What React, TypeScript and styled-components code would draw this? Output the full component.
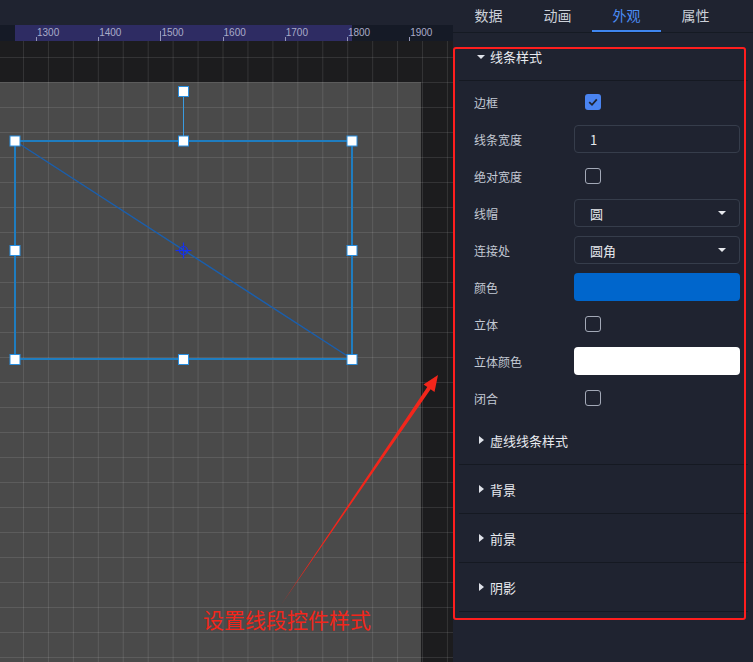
import React from "react";
import styled, { createGlobalStyle, css } from "styled-components";

const GlobalStyle = createGlobalStyle`
  html, body { margin: 0; padding: 0; background: #1f2330; }
  body { font-family: "Noto Sans CJK SC", "Noto Sans", sans-serif; overflow: hidden; }
  * { box-sizing: border-box; }
`;

const Page = styled.div`
  display: flex;
  width: 753px;
  height: 662px;
  overflow: hidden;
`;

/* ---------- canvas side ---------- */
const Canvas = styled.div`
  position: relative;
  width: 453px;
  height: 100%;
  flex: none;
  display: flex;
  flex-direction: column;
  background: #1c1c1e;
`;

const TopBar = styled.div`
  height: 25px;
  flex: none;
  background: #1f2330;
`;

const Ruler = styled.div`
  height: 16px;
  flex: none;
  display: flex;
  padding-left: 36px;
  overflow: hidden;
  background: linear-gradient(
    to right,
    #151a26 0 15px,
    #2e2c63 15px 352px,
    #151a26 352px
  );
`;

const RulerMark = styled.div<{ $tall?: boolean }>`
  position: relative;
  width: 62.2px;
  flex: none;
  padding: 3px 0 0 1px;
  font-family: "Liberation Sans", Arial, sans-serif;
  font-size: 10px;
  line-height: 10px;
  color: #a9abc8;
  &::before {
    content: "";
    position: absolute;
    left: 0;
    bottom: 0;
    width: 1px;
    height: ${(p) => (p.$tall ? "10px" : "4px")};
    background: #9597b8;
  }
`;

const grid = css`
  background-image: linear-gradient(to right, rgba(255, 255, 255, 0.1) 1px, transparent 1px),
    linear-gradient(to bottom, rgba(255, 255, 255, 0.1) 1px, transparent 1px);
  background-size: 24.94px 25px;
`;

const Workspace = styled.div`
  flex: 1;
  display: flex;
  padding: 41px 32px 0 0;
  background-color: #1c1c1e;
  ${grid};
  background-position: 23px 16px;
`;

const Stage = styled.div`
  flex: 1;
  background-color: #4a4a4a;
  ${grid};
  background-position: 23px 0;
`;

const Overlay = styled.svg`
  position: absolute;
  left: 0;
  top: 0;
  width: 453px;
  height: 662px;
  pointer-events: none;
`;

const Annotation = styled.div`
  position: absolute;
  left: 203px;
  top: 607px;
  font-size: 21px;
  line-height: 24px;
  color: #f2261b;
  white-space: nowrap;
`;

/* ---------- panel side ---------- */
const Panel = styled.aside`
  position: relative;
  width: 300px;
  height: 100%;
  flex: none;
  display: flex;
  flex-direction: column;
  background: #1f2330;
`;

const Tabs = styled.div`
  display: flex;
  height: 33px;
  flex: none;
  padding-left: 1px;
  border-bottom: 1px solid #151a23;
`;

const Tab = styled.div<{ $active?: boolean }>`
  width: 69px;
  display: flex;
  align-items: center;
  justify-content: center;
  font-size: 14px;
  color: ${(p) => (p.$active ? "#4b8df5" : "#ccd1d9")};
  border-bottom: 2px solid ${(p) => (p.$active ? "#3f86f0" : "transparent")};
`;

const Sections = styled.div`
  margin: 0 5px 0 6px;
  display: flex;
  flex-direction: column;
`;

const SectionHeader = styled.div<{ $h: number }>`
  height: ${(p) => p.$h}px;
  flex: none;
  display: flex;
  align-items: center;
  gap: 5px;
  padding-left: 18px;
  border-bottom: 1px solid #151922;
  font-size: 13px;
  color: #e8eaef;
`;

const Caret = styled.span<{ $open?: boolean }>`
  width: 8px;
  display: flex;
  justify-content: center;
  &::before {
    content: "";
    width: 0;
    height: 0;
    ${(p) =>
      p.$open
        ? css`
            border-left: 4px solid transparent;
            border-right: 4px solid transparent;
            border-top: 4px solid #dfe2e9;
          `
        : css`
            border-top: 4px solid transparent;
            border-bottom: 4px solid transparent;
            border-left: 5px solid #dfe2e9;
          `}
  }
`;

const SectionBody = styled.div`
  display: flex;
  flex-direction: column;
  gap: 9px;
  padding: 7px 0 4px;
`;

const Row = styled.div`
  display: grid;
  grid-template-columns: 100px 166px;
  align-items: center;
  height: 28px;
  padding-left: 15px;
`;

const Label = styled.span`
  font-size: 12px;
  color: #c3c9d4;
`;

const Field = styled.div`
  height: 28px;
  display: flex;
  align-items: center;
  justify-content: space-between;
  padding: 0 13px 0 15px;
  border: 1px solid #363d4b;
  border-radius: 4px;
  font-size: 13px;
  color: #e6e8ec;
`;

const DropCaret = styled.span`
  width: 0;
  height: 0;
  border-left: 4.5px solid transparent;
  border-right: 4.5px solid transparent;
  border-top: 4.5px solid #e6e8ec;
`;

const Swatch = styled.div<{ $color: string }>`
  height: 28px;
  border-radius: 4px;
  background: ${(p) => p.$color};
`;

const Check = styled.span<{ $checked?: boolean }>`
  margin-left: 11px;
  width: 16px;
  height: 16px;
  border-radius: 3px;
  display: flex;
  align-items: center;
  justify-content: center;
  ${(p) =>
    p.$checked
      ? css`
          background: #4a84f1;
        `
      : css`
          border: 1.5px solid #a3a9b7;
        `}
`;

const RedFrame = styled.div`
  position: absolute;
  left: 0;
  top: 47px;
  width: 293px;
  height: 573px;
  border: 2px solid #ff1e1e;
  border-radius: 3px;
  pointer-events: none;
`;

/* ---------- drawing helpers ---------- */
const Handle: React.FC<{ x: number; y: number }> = ({ x, y }) => (
  <rect x={x - 5} y={y - 5} width={10} height={10} fill="#ffffff" stroke="#2a8fe0" strokeWidth={1} />
);

const rulerMarks = [
  { t: "1300" },
  { t: "1400" },
  { t: "1500", tall: true },
  { t: "1600" },
  { t: "1700" },
  { t: "1800" },
  { t: "1900" },
];

type RowDef =
  | { label: string; kind: "check"; checked?: boolean }
  | { label: string; kind: "input"; value: string }
  | { label: string; kind: "select"; value: string }
  | { label: string; kind: "swatch"; color: string };

const rows: RowDef[] = [
  { label: "边框", kind: "check", checked: true },
  { label: "线条宽度", kind: "input", value: "1" },
  { label: "绝对宽度", kind: "check" },
  { label: "线帽", kind: "select", value: "圆" },
  { label: "连接处", kind: "select", value: "圆角" },
  { label: "颜色", kind: "swatch", color: "#0066cc" },
  { label: "立体", kind: "check" },
  { label: "立体颜色", kind: "swatch", color: "#ffffff" },
  { label: "闭合", kind: "check" },
];

const renderControl = (r: RowDef) => {
  switch (r.kind) {
    case "check":
      return (
        <Check $checked={r.checked}>
          {r.checked && (
            <svg width="12" height="12" viewBox="0 0 12 12">
              <polyline points="2.2,6.2 5,8.8 9.8,3.4" fill="none" stroke="#1f2330" strokeWidth="1.8" />
            </svg>
          )}
        </Check>
      );
    case "input":
      return <Field>{r.value}</Field>;
    case "select":
      return (
        <Field>
          <span>{r.value}</span>
          <DropCaret />
        </Field>
      );
    case "swatch":
      return <Swatch $color={r.color} />;
  }
};

export default function App() {
  return (
    <Page>
      <GlobalStyle />
      <Canvas>
        <TopBar />
        <Ruler>
          {rulerMarks.map((m) => (
            <RulerMark key={m.t} $tall={m.tall}>
              {m.t}
            </RulerMark>
          ))}
        </Ruler>
        <Workspace>
          <Stage />
        </Workspace>
        <Overlay viewBox="0 0 453 662">
          <line x1="183.5" y1="91" x2="183.5" y2="141" stroke="#3a9be0" strokeWidth="1" />
          <rect x="15" y="141" width="337" height="218" fill="none" stroke="#1f7dc0" strokeWidth="2" />
          <line x1="15" y1="141" x2="352" y2="359" stroke="#1a5fae" strokeWidth="1.4" />
          <g stroke="#1530f0" strokeWidth="1.2" fill="none">
            <circle cx="183.5" cy="250.5" r="4" />
            <line x1="175.5" y1="250.5" x2="191.5" y2="250.5" />
            <line x1="183.5" y1="242.5" x2="183.5" y2="258.5" />
          </g>
          <Handle x={183.5} y={91.5} />
          <Handle x={15} y={141} />
          <Handle x={183.5} y={141} />
          <Handle x={352} y={141} />
          <Handle x={15} y={250.5} />
          <Handle x={352} y={250.5} />
          <Handle x={15} y={359.5} />
          <Handle x={183.5} y={359.5} />
          <Handle x={352} y={359.5} />
          <polygon
            points="281,605 427.3,387.1 423.5,384.6 438,375 434.5,391.9 430.6,389.3"
            fill="#f2261b"
          />
        </Overlay>
        <Annotation>设置线段控件样式</Annotation>
      </Canvas>
      <Panel>
        <Tabs>
          <Tab>数据</Tab>
          <Tab>动画</Tab>
          <Tab $active>外观</Tab>
          <Tab>属性</Tab>
        </Tabs>
        <Sections>
          <SectionHeader $h={48}>
            <Caret $open />
            线条样式
          </SectionHeader>
          <SectionBody>
            {rows.map((r) => (
              <Row key={r.label}>
                <Label>{r.label}</Label>
                {renderControl(r)}
              </Row>
            ))}
          </SectionBody>
          {["虚线线条样式", "背景", "前景", "阴影"].map((t) => (
            <SectionHeader key={t} $h={49}>
              <Caret />
              {t}
            </SectionHeader>
          ))}
        </Sections>
        <RedFrame />
      </Panel>
    </Page>
  );
}
